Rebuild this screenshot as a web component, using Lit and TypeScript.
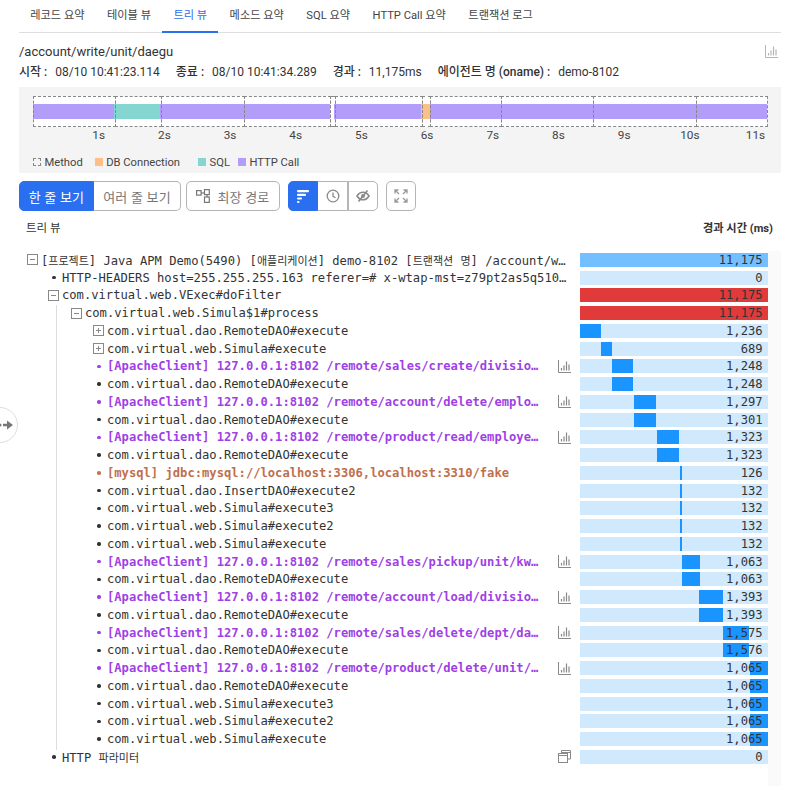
import { LitElement, html, css, svg } from 'lit';
import { customElement } from 'lit/decorators.js';

type Kind = 'plain' | 'http' | 'sql';
type Marker = 'open' | 'closed' | 'dot';

interface Row {
  depth: number;
  marker: Marker;
  text: string;
  ms: number;
  start?: number;
  kind?: Kind;
  bar?: 'root' | 'hot';
  icon?: 'chart' | 'copy';
}

const TOTAL = 11175;
const INDENT = [8, 29, 52, 74];

const http = (path: string, ms: number, start: number): Row => ({
  depth: 3, marker: 'dot', kind: 'http', icon: 'chart', ms, start,
  text: `[ApacheClient] 127.0.0.1:8102 ${path}`,
});
const call = (text: string, ms: number, start: number): Row => ({ depth: 3, marker: 'dot', text, ms, start });

const ROWS: Row[] = [
  { depth: 0, marker: 'open', bar: 'root', ms: 11175, start: 0, text: '[프로젝트] Java APM Demo(5490) [애플리케이션] demo-8102 [트랜잭션 명] /account/write/unit/daegu' },
  { depth: 1, marker: 'dot', ms: 0, text: 'HTTP-HEADERS host=255.255.255.163 referer=# x-wtap-mst=z79pt2as5q510abc x-wtap-tx=1' },
  { depth: 1, marker: 'open', bar: 'hot', ms: 11175, start: 0, text: 'com.virtual.web.VExec#doFilter' },
  { depth: 2, marker: 'open', bar: 'hot', ms: 11175, start: 0, text: 'com.virtual.web.Simula$1#process' },
  { depth: 3, marker: 'closed', ms: 1236, start: 0, text: 'com.virtual.dao.RemoteDAO#execute' },
  { depth: 3, marker: 'closed', ms: 689, start: 1236, text: 'com.virtual.web.Simula#execute' },
  http('/remote/sales/create/division/seoul', 1248, 1925),
  call('com.virtual.dao.RemoteDAO#execute', 1248, 1925),
  http('/remote/account/delete/employee/busan', 1297, 3218),
  call('com.virtual.dao.RemoteDAO#execute', 1301, 3218),
  http('/remote/product/read/employee/incheon', 1323, 4589),
  call('com.virtual.dao.RemoteDAO#execute', 1323, 4589),
  { depth: 3, marker: 'dot', kind: 'sql', ms: 126, start: 5930, text: '[mysql] jdbc:mysql://localhost:3306,localhost:3310/fake' },
  call('com.virtual.dao.InsertDAO#execute2', 132, 5930),
  call('com.virtual.web.Simula#execute3', 132, 5930),
  call('com.virtual.web.Simula#execute2', 132, 5930),
  call('com.virtual.web.Simula#execute', 132, 5930),
  http('/remote/sales/pickup/unit/kwangju', 1063, 6060),
  call('com.virtual.dao.RemoteDAO#execute', 1063, 6060),
  http('/remote/account/load/division/ulsan', 1393, 7110),
  call('com.virtual.dao.RemoteDAO#execute', 1393, 7110),
  http('/remote/sales/delete/dept/daejeon/all', 1575, 8520),
  call('com.virtual.dao.RemoteDAO#execute', 1576, 8520),
  http('/remote/product/delete/unit/jeju/items', 1065, 10110),
  call('com.virtual.dao.RemoteDAO#execute', 1065, 10110),
  call('com.virtual.web.Simula#execute3', 1065, 10110),
  call('com.virtual.web.Simula#execute2', 1065, 10110),
  call('com.virtual.web.Simula#execute', 1065, 10110),
  { depth: 1, marker: 'dot', icon: 'copy', ms: 0, text: 'HTTP 파라미터' },
];

const TABS = ['레코드 요약', '테이블 뷰', '트리 뷰', '메소드 요약', 'SQL 요약', 'HTTP Call 요약', '트랜잭션 로그'];

// widths in px of the timeline strip
const SEGMENTS: [number, string][] = [
  [81.5, 'http'], [46, 'sql'], [169.5, 'http'], [4.5, 'none'], [87, 'http'], [8.5, 'db'], [337.5, 'http'],
];
const METHODS = [81.5, 46, 83, 86.5, 4.5, 87, 8.5, 70.5, 92, 103, 71.5];

const chartIcon = svg`<svg class="ico" viewBox="0 0 13 13" width="13" height="13" fill="none" stroke="currentColor">
  <path d="M.5 0v12.5H13"/><path d="M3.5 10.5V8M6 10.5V5.5M8.5 10.5V1.5M11 10.5V4.5" stroke-width="1.2"/></svg>`;

const copyIcon = svg`<svg class="ico" viewBox="0 0 13 13" width="13" height="13" fill="none" stroke="currentColor">
  <path d="M3.5 3.5V.5h9v8.5H9.500"/><path d="M3.500 2.500h9"/><rect x=".5" y="3.500" width="9" height="9"/><path d="M.5 5.500h9"/></svg>`;

// hangul in the tree runs narrower than the mono font would set it
const withHangul = (text: string) =>
  text.split(/([가-힣]+)/).map((part, i) => (i % 2 ? html`<span class="hangul">${part}</span>` : part));

@customElement('app-root')
export class AppRoot extends LitElement {
  static override styles = css`
    :host {
      display: block;
      position: relative;
      width: 800px;
      height: 786px;
      overflow: hidden;
      background: #fff;
      color: #333;
      font-family: Roboto, 'Noto Sans CJK KR', sans-serif;
      font-size: 12px;
    }

    .page {
      padding: 0 19px;
    }

    .tabs {
      display: flex;
      height: 32px;
      border-bottom: 1px solid #dfdfdf;
    }

    .tab {
      padding: 0 11.250px;
      line-height: 32px;
      height: 33px;
      font-size: 11.200px;
      color: #444;
      white-space: nowrap;
      box-sizing: border-box;
    }

    .tab.active {
      color: #2a6ff0;
      border-bottom: 2px solid #2a6ff0;
    }

    .title-row {
      display: flex;
      justify-content: space-between;
      align-items: center;
      margin-top: 9px;
      height: 18px;
      font-size: 13px;
      color: #333;
    }

    .title-row .ico {
      color: #b5b5b5;
      margin-right: 3px;
    }

    .meta {
      display: flex;
      height: 20px;
      align-items: center;
      gap: 16px;
      font-size: 12px;
      white-space: pre;
    }

    .meta b {
      font-weight: 500;
      margin-right: 8px;
    }

    .timeline {
      margin-top: 7px;
      height: 86px;
      background: #f4f4f4;
      padding: 9px 14px 0;
      box-sizing: border-box;
    }

    .plot {
      position: relative;
      height: 31px;
      width: 734px;
      background: #fff;
    }

    .segments {
      position: absolute;
      inset: 8px 0 8px 0;
      display: flex;
    }

    .seg.http { background: #b39dfb; }
    .seg.sql { background: #84d6d0; }
    .seg.db { background: #ffbe85; }

    .methods {
      position: absolute;
      inset: 0;
      display: flex;
    }

    .method {
      border: 1px dashed #888;
      box-sizing: border-box;
      margin-right: -1px;
    }

    .axis {
      position: relative;
      height: 14px;
      margin-top: 1px;
      width: 734px;
      font-size: 11.800px;
      color: #444;
    }

    .axis span {
      position: absolute;
      top: 0;
      transform: translateX(-50%);
    }

    .legend {
      display: flex;
      align-items: center;
      height: 14px;
      margin-top: 13px;
      font-size: 11.200px;
      color: #444;
    }

    .legend span {
      display: flex;
      align-items: center;
      gap: 3.500px;
    }

    .legend i {
      display: block;
      width: 8px;
      height: 8px;
    }

    .legend .k-method { border: 1px dashed #888; width: 6px; height: 6px; }
    .legend .k-db { background: #ffbe85; }
    .legend .k-sql { background: #84d6d0; }
    .legend .k-http { background: #b39dfb; }
    .legend .l-method { margin-right: 12px; }
    .legend .l-db { margin-right: 18px; }
    .legend .l-sql { margin-right: 8px; }

    .toolbar {
      display: flex;
      align-items: center;
      margin-top: 8px;
      height: 30px;
    }

    .btn {
      display: flex;
      align-items: center;
      justify-content: center;
      height: 30px;
      box-sizing: border-box;
      border: 1px solid #b5b5b5;
      background: #fff;
      color: #777;
      font-size: 13px;
      letter-spacing: 0.2px;
      white-space: nowrap;
    }

    .btn.on {
      background: #2a6ff0;
      border-color: #2a6ff0;
      color: #fff;
    }

    .group {
      display: flex;
    }

    .group .btn + .btn {
      border-left: 0;
    }

    .group .btn:first-child {
      border-radius: 5px 0 0 5px;
    }

    .group .btn:last-child {
      border-radius: 0 5px 5px 0;
    }

    .group .btn.sep {
      border-left: 1px solid #b5b5b5;
    }

    .view-one { width: 75px; }
    .view-many { width: 87px; }
    .longest { width: 94px; margin-left: 5px; border-radius: 5px; gap: 7px; }
    .square { width: 30px; }
    .modes { margin-left: 8px; }
    .expand { width: 30px; margin-left: 8px; border-radius: 5px; }

    .tree-head {
      display: flex;
      justify-content: space-between;
      align-items: center;
      height: 20px;
      margin-top: 6px;
      padding: 0 8px 0 7px;
      font-size: 11.500px;
    }

    .tree-head b {
      font-weight: 700;
      font-size: 11.200px;
      color: #333;
    }

    .tree {
      display: flex;
      margin-top: 14px;
      height: 535px;
    }

    .rows {
      position: relative;
      width: 748.600px;
    }

    .gutter {
      width: 13.400px;
      background: #fafafa;
    }

    .guide {
      position: absolute;
      left: 37px;
      top: 54px;
      width: 1px;
      height: 445px;
      background: #ddd;
    }

    .row {
      display: flex;
      align-items: center;
      height: 17.760px;
      font-family: 'DejaVu Sans Mono', 'Noto Sans CJK KR', monospace;
      font-size: 12.150px;
      color: #333;
    }

    .name {
      flex: 1;
      min-width: 0;
      display: flex;
      align-items: center;
      box-sizing: border-box;
    }

    .marker {
      flex: none;
      width: 14px;
      height: 14px;
      display: flex;
      align-items: center;
    }

    .dot {
      width: 3.500px;
      height: 3.500px;
      border-radius: 50%;
      background: #333;
      margin-left: 4px;
    }

    .http .dot { background: #a040e8; }
    .sql .dot { background: #c4734a; }

    .box {
      display: block;
      color: #888;
    }

    .label {
      overflow: hidden;
      text-overflow: ellipsis;
      white-space: nowrap;
      flex: 1;
      min-width: 0;
    }

    .hangul {
      font-size: 11px;
    }

    .http .label { color: #9f3fe6; font-weight: 700; }
    .sql .label { color: #bf6f4c; font-weight: 700; }

    .row-icon {
      flex: none;
      width: 13px;
      margin: 0 9px 0 14px;
      color: #888;
      display: flex;
    }

    .no-icon {
      flex: none;
      width: 8px;
    }

    .track {
      flex: none;
      position: relative;
      width: 187.600px;
      height: 14px;
      background: #d0e9fd;
    }

    .fill {
      position: absolute;
      top: 0;
      bottom: 0;
      background: #1a94ff;
    }

    .track.root { background: #74bfff; }
    .track.hot { background: #e03a3a; }

    .value {
      position: relative;
      display: block;
      text-align: right;
      padding-right: 5px;
      line-height: 14px;
    }

    .side-toggle {
      position: absolute;
      left: -18px;
      top: 407px;
      width: 36px;
      height: 36px;
      box-sizing: border-box;
      border: 1px solid #ddd;
      border-radius: 50%;
      background: #fff;
      display: flex;
      align-items: center;
      justify-content: flex-end;
      padding-right: 3px;
    }
  `;

  private renderMarker(r: Row) {
    if (r.marker === 'dot') return html`<span class="marker"><i class="dot"></i></span>`;
    return html`<span class="marker">
      <svg class="box" width="11" height="11" viewBox="0 0 11 11" fill="none" stroke="currentColor">
        <rect x=".5" y=".5" width="10" height="10"/>
        <path d=${r.marker === 'open' ? 'M3 5.500h5' : 'M3 5.500h5M5.500 3v5'}/>
      </svg>
    </span>`;
  }

  private renderRow(r: Row) {
    const hasFill = r.ms > 0 && !r.bar;
    return html`<div class="row ${r.kind ?? 'plain'}">
      <div class="name" style="padding-left:${INDENT[r.depth]}px">
        ${this.renderMarker(r)}
        <span class="label">${withHangul(r.text)}</span>
      </div>
      ${r.icon
        ? html`<span class="row-icon">${r.icon === 'chart' ? chartIcon : copyIcon}</span>`
        : html`<span class="no-icon"></span>`}
      <div class="track ${r.bar ?? ''}">
        ${hasFill
          ? html`<div class="fill" style="left:${(r.start! / TOTAL) * 100}%;width:${(r.ms / TOTAL) * 100}%"></div>`
          : ''}
        <span class="value">${r.ms.toLocaleString('en-US')}</span>
      </div>
    </div>`;
  }

  override render() {
    return html`
      <div class="page">
        <nav class="tabs">
          ${TABS.map((t, i) => html`<div class="tab ${i === 2 ? 'active' : ''}">${t}</div>`)}
        </nav>

        <div class="title-row">
          <span>/account/write/unit/daegu</span>
          ${chartIcon}
        </div>
        <div class="meta">
          <span><b>시작 :</b>08/10 10:41:23.114</span>
          <span><b>종료 :</b>08/10 10:41:34.289</span>
          <span><b>경과 :</b>11,175ms</span>
          <span><b>에이전트 명 (oname) :</b>demo-8102</span>
        </div>

        <section class="timeline">
          <div class="plot">
            <div class="segments">
              ${SEGMENTS.map(([w, k]) => html`<div class="seg ${k}" style="width:${w}px"></div>`)}
            </div>
            <div class="methods">
              ${METHODS.map((w) => html`<div class="method" style="width:${w + 1}px"></div>`)}
            </div>
          </div>
          <div class="axis">
            ${Array.from({ length: 11 }, (_, i) => html`<span style="left:${((i + 1) * 1000 * 734) / TOTAL}px">${i + 1}s</span>`)}
          </div>
          <div class="legend">
            <span class="l-method"><i class="k-method"></i>Method</span>
            <span class="l-db"><i class="k-db"></i>DB Connection</span>
            <span class="l-sql"><i class="k-sql"></i>SQL</span>
            <span><i class="k-http"></i>HTTP Call</span>
          </div>
        </section>

        <div class="toolbar">
          <div class="group">
            <div class="btn on view-one">한 줄 보기</div>
            <div class="btn view-many">여러 줄 보기</div>
          </div>
          <div class="btn longest">
            <svg width="14" height="14" viewBox="0 0 14 14" fill="none" stroke="currentColor" stroke-width="1.200">
              <rect x=".6" y="1.600" width="4.500" height="4.500"/><path d="M5 4h3.500"/>
              <rect x="8.500" y=".6" width="4.800" height="5"/><rect x="8.500" y="8" width="4.800" height="5.400"/><path d="M11 5.600V8"/>
            </svg>
            최장 경로
          </div>
          <div class="group modes">
            <div class="btn on square">
              <svg width="14" height="14" viewBox="0 0 14 14" fill="#fff">
                <rect x="1" y="1" width="12" height="2.200" rx="1"/><rect x="1" y="4.700" width="9" height="2.200" rx="1"/>
                <rect x="1" y="8.400" width="5" height="2.200" rx="1"/><rect x="1" y="12" width="2.500" height="2" rx="1"/>
              </svg>
            </div>
            <div class="btn square">
              <svg width="14" height="14" viewBox="0 0 14 14" fill="none" stroke="#8a8a8a" stroke-width="1.300">
                <circle cx="7" cy="7" r="5.800"/><path d="M7 3.500V7.300l2.500 1.500"/>
              </svg>
            </div>
            <div class="btn square sep">
              <svg width="14" height="14" viewBox="0 0 14 14" fill="none" stroke="#8a8a8a" stroke-width="1.600">
                <path d="M1 7c1.600-2.600 3.600-3.800 6-3.800S11.400 4.400 13 7c-1.600 2.600-3.600 3.800-6 3.800S2.600 9.600 1 7z"/>
                <circle cx="7" cy="7" r="1.200" fill="#8a8a8a"/><path d="M2.500 12.500 11.500 1.500"/>
              </svg>
            </div>
          </div>
          <div class="btn expand">
            <svg width="14" height="14" viewBox="0 0 14 14" fill="none" stroke="#9a9a9a" stroke-width="1.300">
              <path d="M1 4.500V1h3.500M1 1l4 4M9.500 1H13v3.500M13 1 9 5M1 9.500V13h3.500M1 13l4-4M13 9.500V13H9.500M13 13 9 9"/>
            </svg>
          </div>
        </div>

        <div class="tree-head">
          <span>트리 뷰</span>
          <b>경과 시간 (ms)</b>
        </div>

        <div class="tree">
          <div class="rows">
            <div class="guide"></div>
            ${ROWS.map((r) => this.renderRow(r))}
          </div>
          <div class="gutter"></div>
        </div>
      </div>

      <div class="side-toggle">
        <svg width="16" height="10" viewBox="0 0 16 10" fill="#777">
          <circle cx="2" cy="5" r="1.500"/><path d="M5 3.800h4V.5L15 5 9 9.500V6.200H5z"/>
        </svg>
      </div>
    `;
  }
}
